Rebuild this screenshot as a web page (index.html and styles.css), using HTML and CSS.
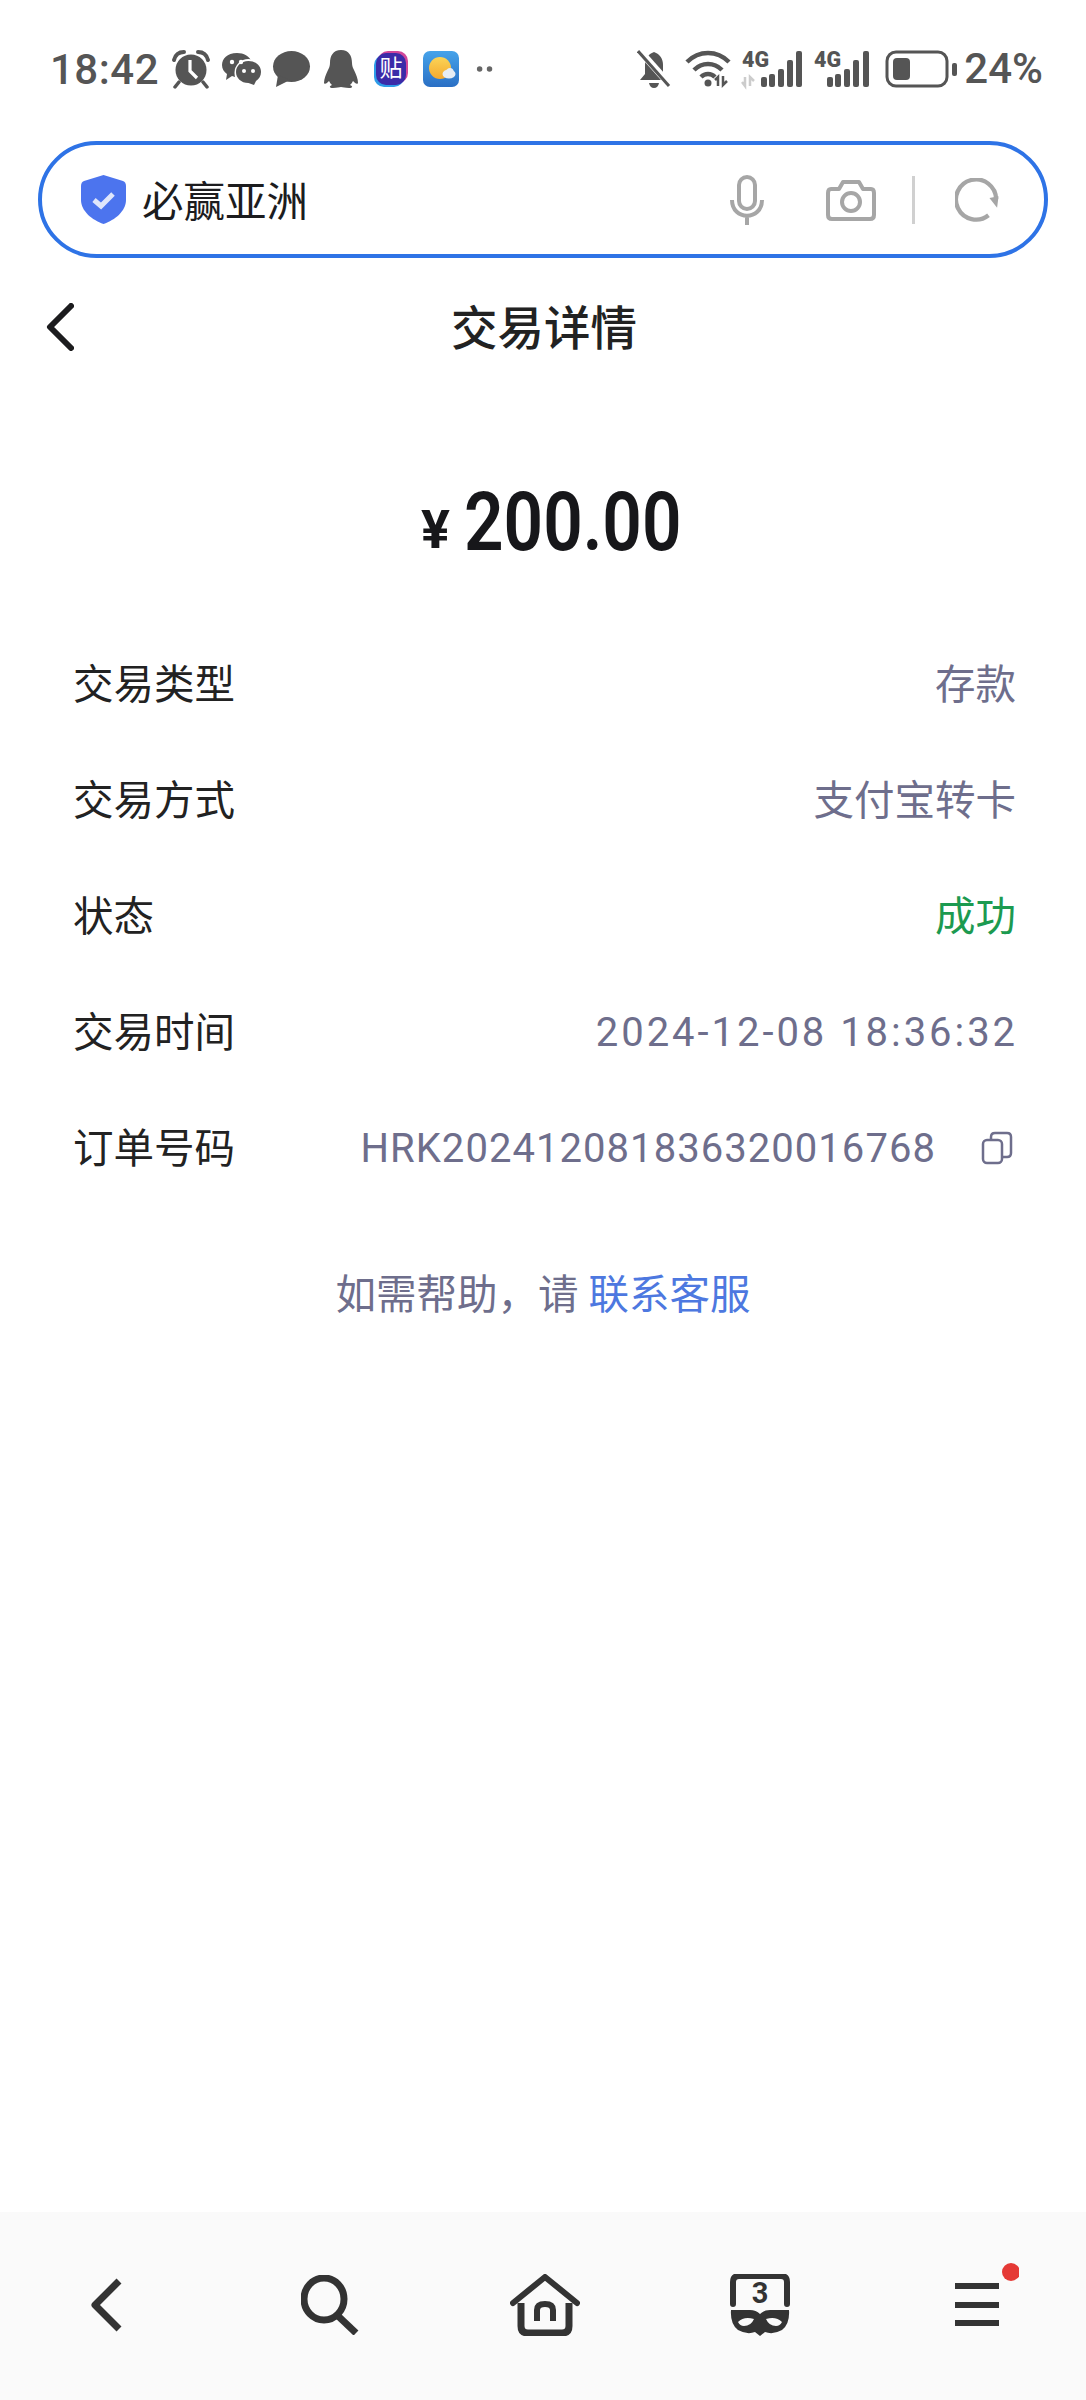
FILE: index.html
```html
<!DOCTYPE html>
<html lang="zh-CN">
<head>
  <meta charset="UTF-8" />
  <meta name="viewport" content="width=device-width, initial-scale=1" />
  <title>交易详情</title>
  <link rel="stylesheet" href="styles.css">
</head>
<body>
  <div class="phone">
    <div class="statusbar">
      <div class="status-left">
        <span class="clock">18:42</span>
        <!-- alarm -->
        <svg class="cell" viewBox="0 0 50 40" width="50" height="40">
          <circle cx="25" cy="21" r="15.5" fill="#555"/>
          <path d="M8 11 Q10 3 18 3 M42 11 Q40 3 32 3" fill="none" stroke="#555" stroke-width="4" stroke-linecap="round"/>
          <path d="M13 33 l-4 5 M37 33 l4 5" stroke="#555" stroke-width="3.5" stroke-linecap="round"/>
          <path d="M24 11 V22 L31 29" fill="none" stroke="#fff" stroke-width="3.2"/>
        </svg>
        <!-- wechat -->
        <svg class="cell" viewBox="0 0 50 40" width="50" height="40">
          <path d="M21 4 C11 4 6 10 6 16 C6 20 8 23 11 25 L10 31 L16 27 C18 28 20 28 22 28 L36 13 C33 7 28 4 21 4Z" fill="#555"/>
          <circle cx="32.500" cy="24" r="14" fill="#fff"/>
          <path d="M32.500 12 C25 12 20 17 20 23 C20 29 25 34 32.500 34 L38 36 L40 32 C43 30 45 27 45 23 C45 17 40 12 32.500 12Z" fill="#555"/>
          <circle cx="16" cy="13" r="2.200" fill="#fff"/><circle cx="25" cy="13" r="2.200" fill="#fff"/>
          <circle cx="28" cy="22" r="2" fill="#fff"/><circle cx="37" cy="22" r="2" fill="#fff"/>
        </svg>
        <!-- message bubble -->
        <svg class="cell" viewBox="0 0 50 40" width="50" height="40">
          <ellipse cx="25.500" cy="17.500" rx="18.500" ry="15.500" fill="#555"/>
          <path d="M12 26 L10 38 L24 31Z" fill="#555"/>
        </svg>
        <!-- qq -->
        <svg class="cell" viewBox="0 0 50 40" width="50" height="40">
          <path d="M25 1 C17 1 14 7 14 14 C14 17 13 19 12 21 C10 25 8 30 8 34 C9 36 11 34 13 32 C14 34 15 35 16 36 C13 37 13 39 17 39 C21 39 23 38 25 38 C27 38 29 39 33 39 C37 39 37 37 34 36 C35 35 36 34 37 32 C39 34 41 36 42 34 C42 30 40 25 38 21 C37 19 36 17 36 14 C36 7 33 1 25 1Z" fill="#555"/>
        </svg>
        <span class="cell tie-cell"><span class="tie-badge">贴</span></span>
        <!-- weather -->
        <svg class="cell" viewBox="0 0 50 40" width="50" height="40">
          <defs>
            <linearGradient id="sky" x1="0" y1="0" x2="0" y2="1">
              <stop offset="0" stop-color="#46a3ea"/><stop offset="1" stop-color="#2a6fc4"/>
            </linearGradient>
            <linearGradient id="sun" x1="0" y1="0" x2="0" y2="1">
              <stop offset="0" stop-color="#fbd457"/><stop offset="1" stop-color="#f4a92e"/>
            </linearGradient>
          </defs>
          <rect x="7" y="2" width="36" height="36" rx="7" fill="url(#sky)"/>
          <circle cx="24" cy="19" r="11" fill="url(#sun)"/>
          <ellipse cx="33" cy="25" rx="6.500" ry="4.500" fill="#e6edf4"/>
          <circle cx="34" cy="22.500" r="3.500" fill="#e6edf4"/>
        </svg>
        <svg class="cell more-dots" viewBox="0 0 50 40" width="38" height="40">
          <circle cx="14" cy="20" r="3.600" fill="#666"/><circle cx="27" cy="20" r="3.600" fill="#666"/>
        </svg>
      </div>

      <div class="status-right">
        <!-- muted bell -->
        <svg class="st-bell" viewBox="0 0 34 40" width="34" height="40">
          <path d="M17 3 C11 5 8 10 8 16 V25 L3 31 H31 L26 25 V16 C26 10 23 5 17 3Z" fill="#555"/>
          <path d="M12 34 H22 Q21 39 17 39 Q13 39 12 34Z" fill="#555"/>
          <path d="M2 1 L33 36" stroke="#fff" stroke-width="7"/>
          <path d="M1 2 L32 37" stroke="#555" stroke-width="3"/>
        </svg>
        <!-- wifi with traffic arrows -->
        <svg class="st-wifi" viewBox="0 0 46 38" width="46" height="38">
          <path d="M2 12 C14 0 32 0 44 12 M9 20 C17 12 29 12 37 20 M16 27 C20 23 26 23 30 27" fill="none" stroke="#555" stroke-width="4.500"/>
          <circle cx="23" cy="33" r="3.500" fill="#555"/>
          <path d="M33 36 V27 L30 30 M38 26 V35 L42 31" fill="none" stroke="#555" stroke-width="2.500"/>
        </svg>
        <!-- sim 1 -->
        <svg class="st-sim" viewBox="0 0 60 38" width="60" height="38">
          <text class="net" x="0" y="17" textLength="27" lengthAdjust="spacingAndGlyphs">4G</text>
          <path d="M3 27 V36 L0 32 M8 36 V27 L12 31" fill="none" stroke="#ccc" stroke-width="2.500"/>
          <rect x="19" y="27" width="6" height="10" rx="2" fill="#555"/>
          <rect x="27" y="24" width="6" height="13" rx="2" fill="#555"/>
          <rect x="36" y="19" width="6" height="18" rx="2" fill="#555"/>
          <rect x="45" y="10" width="6" height="27" rx="2" fill="#555"/>
          <rect x="54" y="1" width="6" height="36" rx="2" fill="#555"/>
        </svg>
        <!-- sim 2 -->
        <svg class="st-sim st-sim2" viewBox="0 0 55 38" width="55" height="38">
          <text class="net" x="0" y="17" textLength="27" lengthAdjust="spacingAndGlyphs">4G</text>
          <rect x="13" y="27" width="6" height="10" rx="2" fill="#555"/>
          <rect x="21" y="24" width="6" height="13" rx="2" fill="#555"/>
          <rect x="30" y="19" width="6" height="18" rx="2" fill="#555"/>
          <rect x="39" y="10" width="6" height="27" rx="2" fill="#555"/>
          <rect x="49" y="1" width="6" height="36" rx="2" fill="#555"/>
        </svg>
        <!-- battery -->
        <svg viewBox="0 0 72 38" width="72" height="38">
          <rect x="2" y="2" width="60" height="34" rx="9" fill="none" stroke="#555" stroke-width="3"/>
          <rect x="8" y="8" width="17" height="22" rx="4" fill="#555"/>
          <rect x="67" y="13" width="5" height="13" rx="2" fill="#555"/>
        </svg>
        <span class="percent">24%</span>
      </div>
    </div>

    <div class="addressbar">
      <svg class="shield" viewBox="0 0 45 49" width="45" height="49">
        <path d="M22.500 0 L42 6 Q45 7 45 11 V25 C45 36 34 45 22.500 49 C11 45 0 36 0 25 V11 Q0 7 3 6Z" fill="#4c74ee"/>
        <path d="M13 25 L20 31 L32 19" fill="none" stroke="#dfe6fb" stroke-width="5"/>
      </svg>
      <span class="site">必赢亚洲</span>
      <div class="address-tools">
        <!-- mic -->
        <svg viewBox="0 0 34 50" width="34" height="50">
          <rect x="9" y="2" width="16" height="32" rx="8" fill="none" stroke="#a6a6a6" stroke-width="4"/>
          <path d="M2 25 C2 46 32 46 32 25 M17 40 V50" fill="none" stroke="#a6a6a6" stroke-width="4"/>
        </svg>
        <!-- camera -->
        <svg class="tool-camera" viewBox="0 0 50 42" width="50" height="42">
          <path d="M5 10 H13 L17 3 H33 L37 10 H45 Q48 10 48 14 V36 Q48 40 44 40 H6 Q2 40 2 36 V14 Q2 10 5 10Z" fill="none" stroke="#a6a6a6" stroke-width="4" stroke-linejoin="round"/>
          <circle cx="25" cy="23" r="9" fill="none" stroke="#a6a6a6" stroke-width="4"/>
        </svg>
        <span class="tool-divider"></span>
        <!-- reload -->
        <svg viewBox="0 0 46 46" width="44" height="44">
          <path d="M35 39 A21 21 0 1 1 43 22" fill="none" stroke="#a6a6a6" stroke-width="4.500"/>
          <path d="M36 21 L44 31 L45.500 19Z" fill="#a6a6a6"/>
        </svg>
      </div>
    </div>

    <div class="topnav">
      <svg class="topnav-back" viewBox="0 0 28 48" width="28" height="48">
        <path d="M25 3 L4 24 L25 45" fill="none" stroke="#1c1c1e" stroke-width="6" stroke-linecap="round" stroke-linejoin="round"/>
      </svg>
      <span class="topnav-title">交易详情</span>
    </div>

    <div class="amount">
      <span class="amount-sign">¥</span><span class="amount-num">200.00</span>
    </div>

    <div class="detail">
      <div class="detail-row"><span>交易类型</span><span class="val">存款</span></div>
      <div class="detail-row"><span>交易方式</span><span class="val">支付宝转卡</span></div>
      <div class="detail-row"><span>状态</span><span class="val ok">成功</span></div>
      <div class="detail-row"><span>交易时间</span><span class="val num when">2024-12-08 18:36:32</span></div>
      <div class="detail-row">
        <span>订单号码</span>
        <span class="order">
          <span class="val num">HRK202412081836320016768</span>
          <svg class="copy" viewBox="0 0 32 34" width="32" height="34">
            <rect x="2" y="9" width="19" height="23" rx="4" fill="none" stroke="#6e6e8c" stroke-width="2.500"/>
            <path d="M10 8 V6 Q10 2 14 2 H26 Q30 2 30 6 V22 Q30 26 26 26 H22" fill="none" stroke="#6e6e8c" stroke-width="2.500"/>
          </svg>
        </span>
      </div>
    </div>

    <p class="help">如需帮助，请 <a href="#">联系客服</a></p>

    <div class="bottombar">
      <svg class="bar-back" viewBox="0 0 34 56" width="34" height="56">
        <path d="M29 4 L5 28 L29 52" fill="none" stroke="#333" stroke-width="7" stroke-linejoin="round"/>
      </svg>
      <svg class="bar-search" viewBox="0 0 60 60" width="60" height="60">
        <ellipse cx="23" cy="24" rx="20" ry="21" fill="none" stroke="#333" stroke-width="7"/>
        <path d="M36 40 L55 58" stroke="#333" stroke-width="7"/>
      </svg>
      <svg class="bar-home" viewBox="0 0 70 62" width="70" height="62">
        <path d="M3 29 L35 3 L67 29" fill="none" stroke="#333" stroke-width="6" stroke-linecap="round" stroke-linejoin="round"/>
        <path d="M11 29 V52 Q11 59 18 59 H52 Q59 59 59 52 V29" fill="none" stroke="#333" stroke-width="7"/>
        <path d="M27 47 V36 Q27 30 35 30 Q43 30 43 36 V47" fill="none" stroke="#333" stroke-width="6"/>
      </svg>
      <svg viewBox="0 0 60 62" width="60" height="62">
        <path d="M3 30 V8 Q3 2 9 2 H51 Q57 2 57 8 V30" fill="none" stroke="#333" stroke-width="6" stroke-linecap="round"/>
        <text class="tab-count" x="30" y="29" text-anchor="middle">3</text>
        <path d="M1 36 H20 Q26 36 30 40 Q34 36 40 36 H59 Q60 50 52 56 Q43 61 35 58 L30 62 L25 58 Q17 61 8 56 Q0 50 1 36Z" fill="#333"/>
        <path d="M8 48 Q14 42 24 45 Q21 52 14 52 Q10 52 8 48Z M52 48 Q46 42 36 45 Q39 52 46 52 Q50 52 52 48Z" fill="#fafafa"/>
      </svg>
      <svg class="menu" viewBox="0 0 64 66" width="64" height="66">
        <rect x="0" y="20" width="44" height="6" fill="#333"/>
        <rect x="0" y="39" width="44" height="6" fill="#333"/>
        <rect x="0" y="57" width="44" height="6" fill="#333"/>
        <circle cx="56" cy="9" r="9" fill="#e53935"/>
      </svg>
    </div>
  </div>
</body>
</html>
```

FILE: styles.css
```css
* { box-sizing: border-box; margin: 0; padding: 0; }
html, body { background: #fff; }
body {
  font-family: Roboto, "Noto Sans CJK SC", sans-serif;
  color: #222;
}
.phone {
  width: 1086px;
  height: 2400px;
  display: flex;
  flex-direction: column;
  overflow: hidden;
}

/* status bar */
.statusbar {
  height: 100px;
  padding: 49px 43px 0 50px;
  display: flex;
  justify-content: space-between;
  align-items: flex-start;
  color: #555;
}
.status-left, .status-right { display: flex; align-items: center; height: 40px; }
.status-right { gap: 12px; }
.clock { font-size: 42px; font-weight: 500; width: 116px; letter-spacing: .5px; }
.cell { flex: none; }
.more-dots { margin-left: 3px; }
.tie-cell { width: 50px; display: flex; justify-content: center; }
.tie-badge {
  width: 30px; height: 32px;
  border-radius: 10px;
  background: #3b2ba8;
  box-shadow: -2px 2px 0 #2e9ce8, 2px -2px 0 #d0479a;
  color: #fff;
  font-size: 23px;
  line-height: 32px;
  text-align: center;
}
.st-bell { margin-right: 2px; }
.st-wifi { margin-right: -1px; }
.st-sim { overflow: visible; }
.st-sim2 { margin-right: 4px; }
.net { font: 900 22px Roboto, sans-serif; fill: #555; }
.percent { font-size: 42px; font-weight: 500; margin-left: -5px; line-height: 40px; }

/* address bar */
.addressbar {
  margin: 41px 38px 0;
  height: 117px;
  border: 4px solid #2e73e6;
  border-radius: 59px;
  display: flex;
  align-items: center;
  padding: 0 45px 0 39px;
}
.shield { flex: none; }
.site { margin-left: 16px; padding-bottom: 2px; font-size: 41.5px; color: #1c1c1e; }
.address-tools { margin-left: auto; display: flex; align-items: center; }
.tool-camera { margin-left: 62px; }
.tool-divider { width: 3px; height: 48px; background: #d0d0d0; margin: 0 40px 0 36px; }

/* page header */
.topnav {
  position: relative;
  height: 138px;
  display: flex;
  align-items: center;
  justify-content: center;
}
.topnav-back { position: absolute; left: 46px; top: 45px; }
.topnav-title { font-size: 46.5px; font-weight: 500; color: #222; padding: 0 0 5px 2px; }

/* amount */
.amount {
  height: 227px;
  padding: 26px 0 0 12px;
  display: flex;
  align-items: center;
  justify-content: center;
  color: #17171a;
}
.amount-sign { font-size: 54px; font-weight: 700; margin-top: 14px; }
.amount-num {
  font-size: 81px;
  font-weight: 600;
  display: inline-block;
  width: 213px;
  margin-left: 14px;
  white-space: nowrap;
  transform: scaleX(.855);
  transform-origin: left center;
}

/* detail rows */
.detail { padding: 0 70px 0 73px; }
.detail-row {
  height: 116px;
  display: flex;
  justify-content: space-between;
  align-items: center;
  font-size: 40.5px;
}
.val { color: #6e6e8c; }
.val.ok { color: #1c9a50; }
.val.num { letter-spacing: 1.05px; font-size: 40px; padding-top: 6px; }
.val.when { letter-spacing: 2.95px; margin-right: -2px; }
.order { display: flex; align-items: center; gap: 45px; padding-right: 3px; }
.copy { margin-top: 6px; }

.help {
  margin-top: 62px;
  text-align: center;
  font-size: 40.5px;
  line-height: 60px;
  color: #6e6e8c;
}
.help a { color: #4d78e0; text-decoration: none; }

/* browser toolbar */
.bottombar {
  margin-top: auto;
  height: 188px;
  background: #fafafa;
  display: grid;
  grid-template-columns: repeat(5, 1fr);
  align-items: center;
  justify-items: center;
}
.bottombar svg { margin-top: -2px; }
.bar-back { margin-right: 4px; }
.bar-search { margin-left: 10px; }
.bar-home { margin-left: 4px; }
.tab-count { font: 700 29px Roboto, sans-serif; fill: #333; }
.bottombar .menu { margin-left: 20px; margin-top: -20px; }
```
